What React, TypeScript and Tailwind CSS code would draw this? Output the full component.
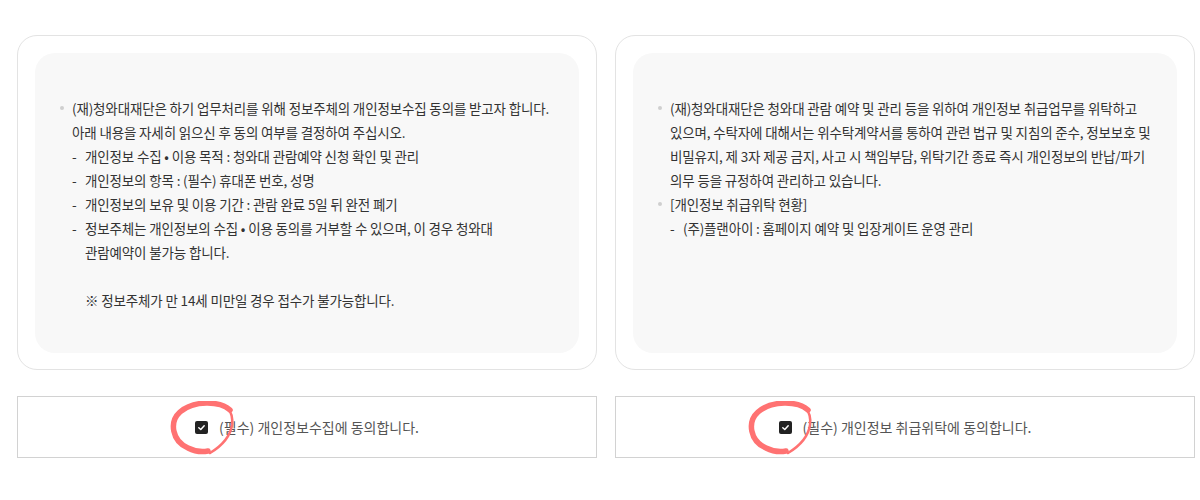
import React from 'react';

const Dot = () => (
  <span className="mt-[10px] mr-[8px] h-[4px] w-[4px] shrink-0 rounded-full bg-[#cfcfcf]" />
);

function Bullet({ children }: { children: React.ReactNode }) {
  return (
    <div className="flex">
      <Dot />
      <div>{children}</div>
    </div>
  );
}

function Dash({ children }: { children: React.ReactNode }) {
  return (
    <div className="flex">
      <span className="w-[13px] shrink-0">-</span>
      <div>{children}</div>
    </div>
  );
}

function Scribble({ className }: { className: string }) {
  return (
    <svg
      className={`pointer-events-none absolute ${className}`}
      width="70"
      height="56"
      viewBox="0 0 70 56"
      fill="none"
    >
      <path
        d="M62 9 C52 0 26 -1 12 11 C1 21 4 40 20 47 C28 51 35 51 40 50"
        stroke="#ff7272"
        strokeWidth="5.5"
        strokeLinecap="round"
      />
      <path
        d="M42 52 C52 46 62 37 64 24 C65 16 63 11 60 8"
        stroke="#ff7272"
        strokeWidth="2.5"
        strokeLinecap="round"
      />
    </svg>
  );
}

function Agree({ text, circle }: { text: string; circle: string }) {
  return (
    <div className="flex h-[62px] items-center justify-center border border-[#d2d2d2] bg-white">
      <div className="flex items-center gap-[11px]">
        <span className="relative flex h-[13px] w-[13px] items-center justify-center rounded-[2px] bg-[#222]">
          <svg width="9" height="9" viewBox="0 0 10 10" fill="none">
            <path d="M2 5.2 L4.2 7.3 L8 3" stroke="#fff" strokeWidth="1.6" strokeLinecap="round" strokeLinejoin="round" />
          </svg>
          <Scribble className={circle} />
        </span>
        <span className="text-[14px] text-[#555]">{text}</span>
      </div>
    </div>
  );
}

function Card({ children }: { children: React.ReactNode }) {
  return (
    <div className="rounded-[20px] border border-[#e3e3e3] bg-white px-[17px] pt-[17px] pb-[16px]">
      <div className="h-[300px] whitespace-nowrap rounded-[20px] bg-[#f8f8f8] pt-[43px] pl-[25px] text-[13.5px] leading-[24px] tracking-[-0.15px] text-[#333]">
        {children}
      </div>
    </div>
  );
}

export default function App() {
  return (
    <div className="min-h-screen bg-white pt-[35px] pl-[17px] font-['Noto_Sans_CJK_KR','Noto_Sans',sans-serif]">
      <div className="flex gap-[18px]">
        <section className="flex w-[580px] flex-col gap-[26px]">
          <Card>
            <Bullet>
              (재)청와대재단은 하기 업무처리를 위해 정보주체의 개인정보수집 동의를 받고자 합니다.
              <br />
              아래 내용을 자세히 읽으신 후 동의 여부를 결정하여 주십시오.
              <Dash>개인정보 수집 • 이용 목적 : 청와대 관람예약 신청 확인 및 관리</Dash>
              <Dash>개인정보의 항목 : (필수) 휴대폰 번호, 성명</Dash>
              <Dash>개인정보의 보유 및 이용 기간 : 관람 완료 5일 뒤 완전 폐기</Dash>
              <Dash>
                정보주체는 개인정보의 수집 • 이용 동의를 거부할 수 있으며, 이 경우 청와대
                <br />
                관람예약이 불가능 합니다.
              </Dash>
              <div className="mt-[24px] pl-[13px]">※ 정보주체가 만 14세 미만일 경우 접수가 불가능합니다.</div>
            </Bullet>
          </Card>
          <Agree text="(필수) 개인정보수집에 동의합니다." circle="left-[-27px] top-[-20px]" />
        </section>
        <section className="flex w-[580px] flex-col gap-[26px]">
          <Card>
            <Bullet>
              (재)청와대재단은 청와대 관람 예약 및 관리 등을 위하여 개인정보 취급업무를 위탁하고
              <br />
              있으며, 수탁자에 대해서는 위수탁계약서를 통하여 관련 법규 및 지침의 준수, 정보보호 및
              <br />
              비밀유지, 제 3자 제공 금지, 사고 시 책임부담, 위탁기간 종료 즉시 개인정보의 반납/파기
              <br />
              의무 등을 규정하여 관리하고 있습니다.
            </Bullet>
            <Bullet>
              [개인정보 취급위탁 현황]
              <Dash>(주)플랜아이 : 홈페이지 예약 및 입장게이트 운영 관리</Dash>
            </Bullet>
          </Card>
          <Agree text="(필수) 개인정보 취급위탁에 동의합니다." circle="left-[-33px] top-[-20px]" />
        </section>
      </div>
    </div>
  );
}
